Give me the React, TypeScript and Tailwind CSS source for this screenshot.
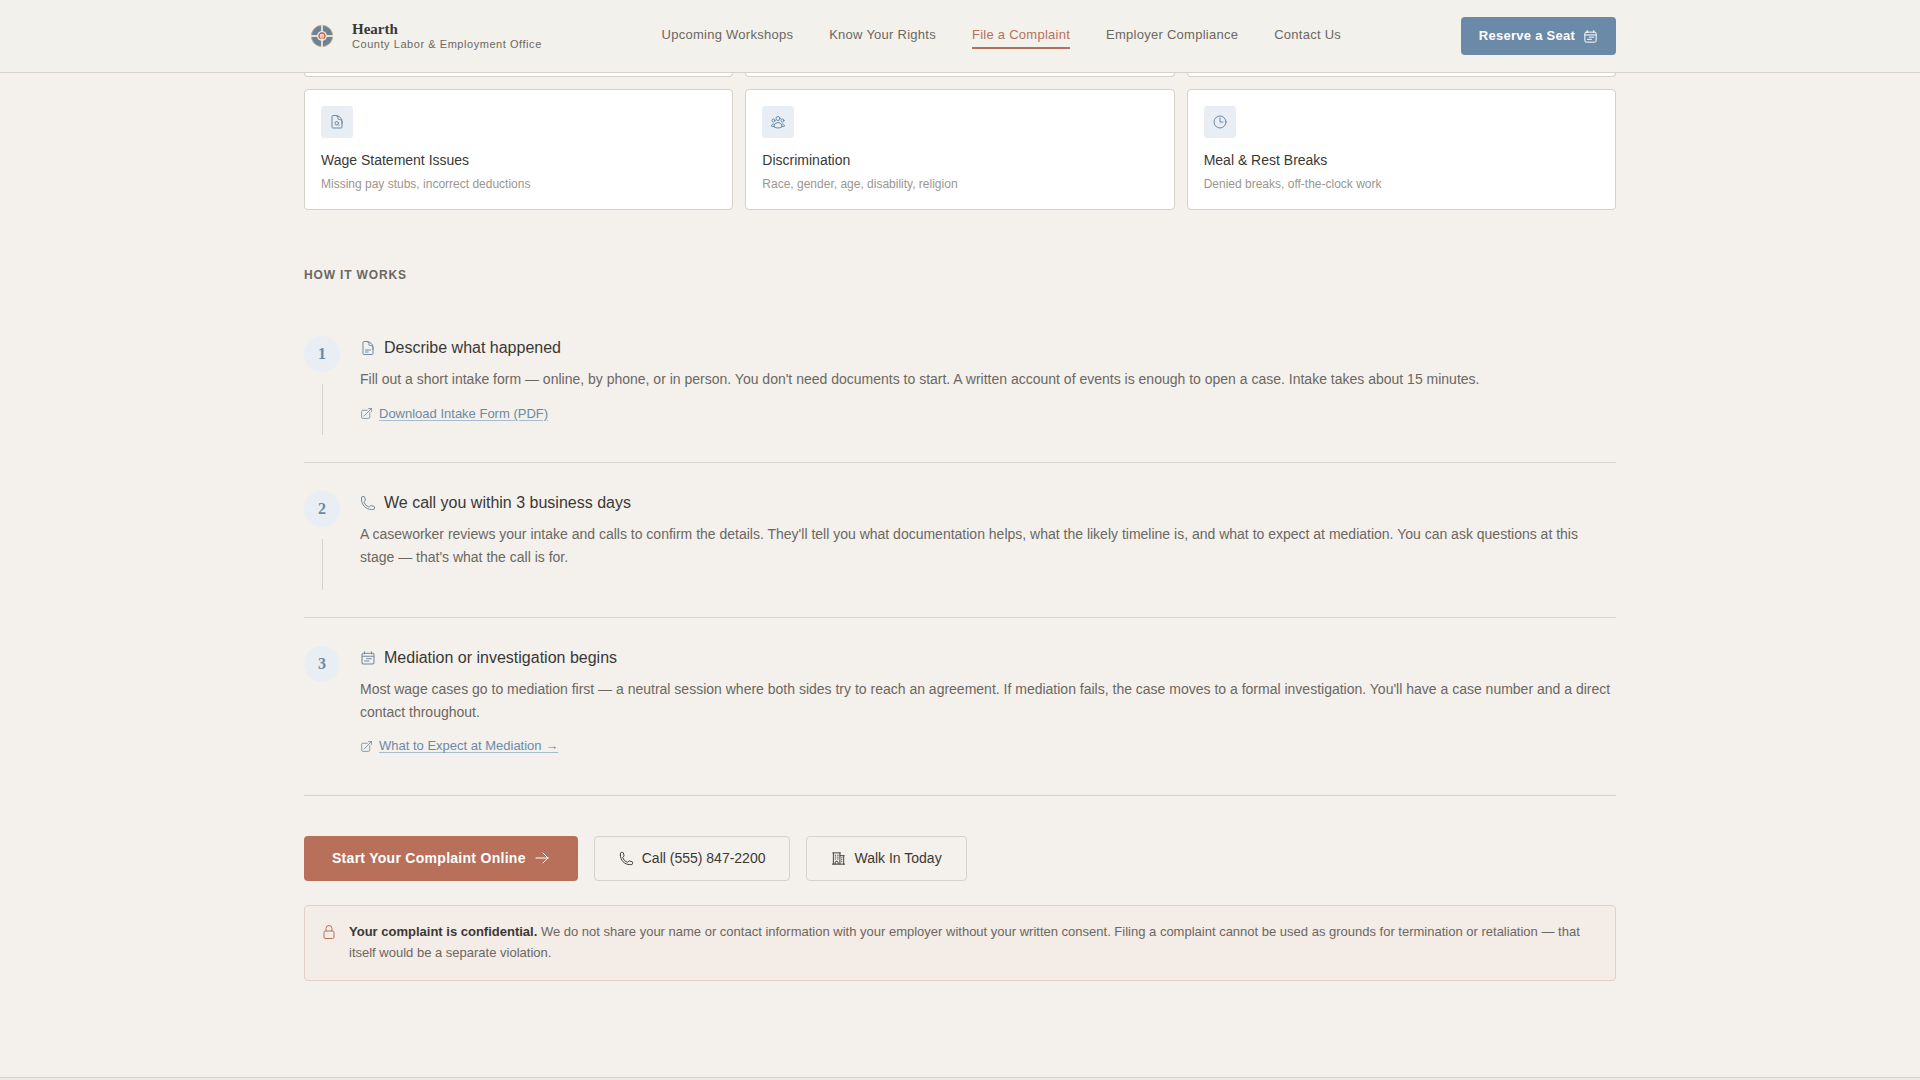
import React from 'react';
import {
  HiOutlineArrowRight,
  HiOutlineArrowTopRightOnSquare,
  HiOutlineBuildingOffice2,
  HiOutlineClock,
  HiOutlineDocumentMagnifyingGlass,
  HiOutlineDocumentText,
  HiOutlineLockClosed,
  HiOutlinePhone,
  HiOutlineUserGroup,
} from 'react-icons/hi2';

const navItems = [
  { label: 'Upcoming Workshops' },
  { label: 'Know Your Rights' },
  { label: 'File a Complaint', active: true },
  { label: 'Employer Compliance' },
  { label: 'Contact Us' },
];

const categories = [
  { icon: HiOutlineDocumentMagnifyingGlass, title: 'Wage Statement Issues', text: 'Missing pay stubs, incorrect deductions' },
  { icon: HiOutlineUserGroup, title: 'Discrimination', text: 'Race, gender, age, disability, religion' },
  { icon: HiOutlineClock, title: 'Meal & Rest Breaks', text: 'Denied breaks, off-the-clock work' },
];

const steps = [
  {
    icon: HiOutlineDocumentText,
    title: 'Describe what happened',
    text: "Fill out a short intake form — online, by phone, or in person. You don't need documents to start. A written account of events is enough to open a case. Intake takes about 15 minutes.",
    link: 'Download Intake Form (PDF)',
  },
  {
    icon: HiOutlinePhone,
    title: 'We call you within 3 business days',
    text: "A caseworker reviews your intake and calls to confirm the details. They'll tell you what documentation helps, what the likely timeline is, and what to expect at mediation. You can ask questions at this stage — that's what the call is for.",
  },
  {
    icon: CalendarIcon,
    title: 'Mediation or investigation begins',
    text: "Most wage cases go to mediation first — a neutral session where both sides try to reach an agreement. If mediation fails, the case moves to a formal investigation. You'll have a case number and a direct contact throughout.",
    link: 'What to Expect at Mediation →',
  },
];

function CalendarIcon({ className }: { className?: string }) {
  return (
    <svg className={className} viewBox="0 0 24 24" fill="none" stroke="currentColor" strokeWidth="1.6" strokeLinecap="round" strokeLinejoin="round">
      <path d="M6.75 2.5v3m10.5-3v3M5.25 5h13.5A2.25 2.25 0 0 1 21 7.25v11.5A2.25 2.25 0 0 1 18.75 21H5.25A2.25 2.25 0 0 1 3 18.75V7.25A2.25 2.25 0 0 1 5.25 5ZM3 9.5h18M10 13h7M7 16.5h6.5" />
    </svg>
  );
}

function Logo() {
  return (
    <svg className="size-9" viewBox="0 0 36 36" fill="none">
      <circle cx="18" cy="18" r="10.7" fill="#6b8294" stroke="#cba98e" strokeWidth="0.9" />
      <path d="M18 7v22M7 18h22" stroke="#eadfd3" strokeWidth="1.9" />
      <circle cx="18" cy="18" r="5" fill="#f3e4da" />
      <path d="M16.7 20.7a3 3 0 1 1 2.6 0" stroke="#c0604a" strokeWidth="1.4" />
      <path d="M18 17.2v3.6" stroke="#c98a78" strokeWidth="1.1" />
    </svg>
  );
}

function Header() {
  return (
    <header className="sticky top-0 z-50 h-[73px] shrink-0 border-b border-[#d5d2cb] bg-[#f3f1ec]">
      <div className="mx-auto flex h-full w-[1312px] items-center justify-between">
        <a className="flex items-center gap-3">
          <Logo />
          <div>
            <div className="font-['Liberation_Serif',serif] text-[15px] leading-[17px] font-bold text-[#3a3835]">Hearth</div>
            <div className="text-[11px] leading-[13px] tracking-[0.05em] text-[#6b6762]">County Labor &amp; Employment Office</div>
          </div>
        </a>

        <nav className="flex items-center gap-9">
          {navItems.map((item) => (
            <a
              key={item.label}
              className={
                item.active
                  ? 'border-b-2 border-[#b8705a] pt-px pb-0.5 text-[13px] leading-5 tracking-[0.02em] text-[#b8705a]'
                  : 'border-b-2 border-transparent pt-px pb-0.5 text-[13px] leading-5 tracking-[0.02em] text-[#6b6762]'
              }
            >
              {item.label}
            </a>
          ))}
        </nav>

        <button className="flex h-[38px] items-center gap-2 rounded-[4px] bg-[#6b8aa8] px-[18px] text-[13px] font-bold tracking-[0.02em] text-white">
          Reserve a Seat
          <CalendarIcon className="size-[15px]" />
        </button>
      </div>
    </header>
  );
}

export default function App() {
  return (
    <div className="flex h-[1080px] flex-col overflow-hidden bg-[#f4f1ec] font-['Liberation_Sans',Arial,sans-serif] text-[#3a3835]">
      <Header />

      <main className="mx-auto w-[1312px] flex-1">
        {/* Bottom edge of the first category row */}
        <div className="grid grid-cols-3 gap-3">
          {categories.map((c) => (
            <div key={c.title} className="h-1 rounded-b-[4px] border border-t-0 border-[#d5d0c8] bg-white" />
          ))}
        </div>

        <div className="mt-3 grid grid-cols-3 gap-3">
          {categories.map(({ icon: Icon, title, text }) => (
            <div key={title} className="h-[121px] rounded-[4px] border border-[#d5d0c8] bg-white p-4">
              <div className="flex size-8 items-center justify-center rounded-[3px] bg-[#e8eef4] text-[#6b8aa8]">
                <Icon className="size-4" />
              </div>
              <h3 className="mt-3 text-sm leading-[21px]">{title}</h3>
              <p className="mt-1 text-xs leading-[18px] text-[#9a9690]">{text}</p>
            </div>
          ))}
        </div>

        <h2 className="mt-14 text-xs leading-[18px] font-bold tracking-[0.07em] text-[#6b6762]">HOW IT WORKS</h2>

        <div className="mt-6">
          {steps.map(({ icon: Icon, title, text, link }, i) => (
            <div key={title} className="flex gap-5 border-b border-[#d5d2cb] py-7">
              <div className="flex w-9 flex-col items-center">
                <div className="flex size-9 items-center justify-center rounded-full bg-[#e8eef4] font-['Liberation_Serif',serif] text-base font-bold text-[#6b8aa8]">
                  {i + 1}
                </div>
                {i < steps.length - 1 && <div className="mt-3 -mb-px h-[51px] w-px bg-[#d5d2cb]" />}
              </div>
              <div className="flex-1">
                <h3 className="flex items-center gap-2 text-base leading-6">
                  <Icon className="size-4 text-[#6b8aa8]" />
                  {title}
                </h3>
                <p className="mt-2 text-sm leading-relaxed text-[#6b6762]">{text}</p>
                {link && (
                  <a className="mt-[12.8px] mb-[10.5px] flex items-center gap-1.5 text-[13px] leading-5 text-[#6b8aa8]">
                    <HiOutlineArrowTopRightOnSquare className="size-[13px]" />
                    <span className="underline decoration-[#a9bccd] underline-offset-2">{link}</span>
                  </a>
                )}
              </div>
            </div>
          ))}
        </div>

        <div className="mt-10 flex gap-4">
          <button className="flex h-[45px] items-center gap-2 rounded-[4px] bg-[#b8705a] px-7 text-sm font-bold tracking-[0.02em] text-white">
            <span className="pb-px">Start Your Complaint Online</span>
            <HiOutlineArrowRight className="size-4" />
          </button>
          <button className="flex h-[45px] items-center gap-2 rounded-[4px] border border-[#d5d2cb] px-6 text-sm">
            <HiOutlinePhone className="size-[15px]" />
            <span className="pb-px">Call (555) 847-2200</span>
          </button>
          <button className="flex h-[45px] items-center gap-2 rounded-[4px] border border-[#d5d2cb] px-6 text-sm">
            <HiOutlineBuildingOffice2 className="size-[15px]" />
            <span className="pb-px">Walk In Today</span>
          </button>
        </div>

        <div className="mt-6 flex h-[76px] gap-3 rounded-[4px] border border-[#e2d0c8] bg-[#f4ece6] px-4 pt-[15px]">
          <HiOutlineLockClosed className="mt-[3px] size-4 shrink-0 text-[#b8705a]" />
          <p className="text-[13px] leading-[21px] text-[#6b6762]">
            <strong className="text-[#3a3835]">Your complaint is confidential.</strong> We do not share your name or contact information with your employer without your written consent. Filing a complaint cannot be used as grounds for termination or retaliation — that itself would be a separate violation.
          </p>
        </div>
      </main>

      <footer className="h-[3px] shrink-0 border-t border-[#d5d2cb] bg-[#eceae3]" />
    </div>
  );
}
